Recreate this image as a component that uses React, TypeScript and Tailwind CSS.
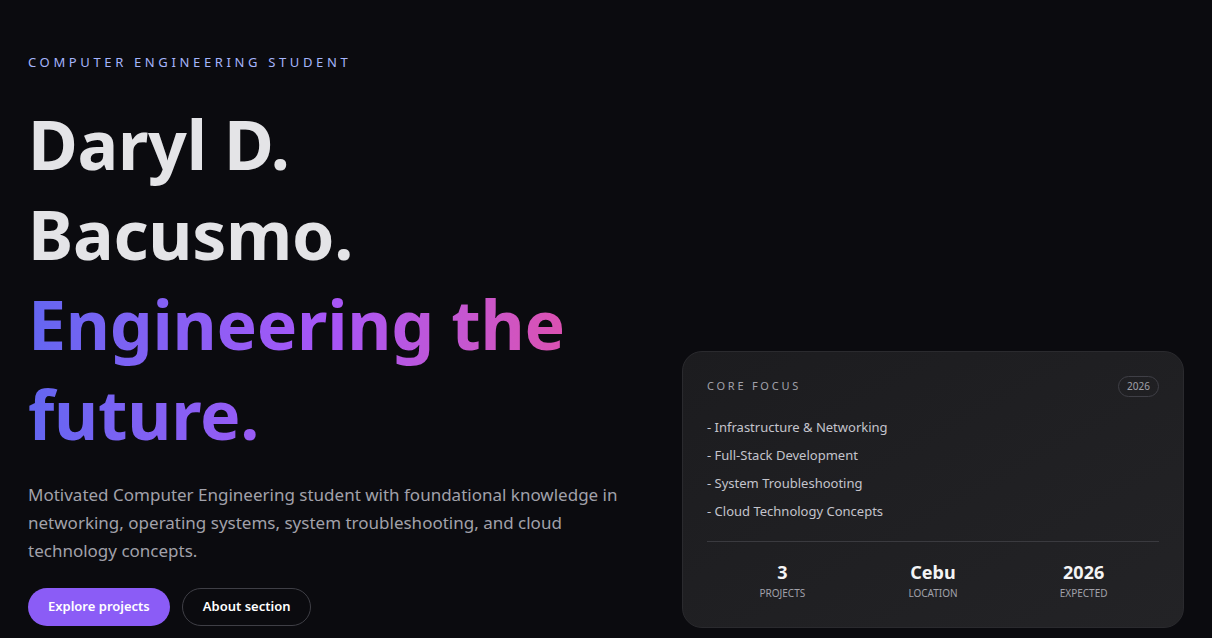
import React from "react";

const focus = [
  "Infrastructure & Networking",
  "Full-Stack Development",
  "System Troubleshooting",
  "Cloud Technology Concepts",
];

const stats = [
  { value: "3", label: "Projects" },
  { value: "Cebu", label: "Location" },
  { value: "2026", label: "Expected" },
];

export default function App() {
  return (
    <div
      className="min-h-[638px] w-full bg-[#0b0b0f] text-white overflow-hidden"
      style={{ fontFamily: '"Noto Sans", "Open Sans", sans-serif' }}
    >
      <section className="flex items-end justify-between px-7 pt-[54px] pb-[9px]">
        <div className="flex-1 pb-[2px]">
          <p className="text-[13px] leading-[16px] tracking-[0.28em] text-[#a5b4fc]">
            COMPUTER ENGINEERING STUDENT
          </p>
          <h1 className="mt-[29px] text-[68px] font-bold leading-[90px] tracking-[-0.004em] text-[#e4e4e7]">
            <span className="block">Daryl D.</span>
            <span className="block">Bacusmo.</span>
            <span className="block w-[610px] bg-gradient-to-r from-[#6366f1] via-[#a855f7] to-[#ec4899] bg-clip-text text-transparent">
              Engineering the future.
            </span>
          </h1>
          <p className="mt-[22px] max-w-[600px] text-[17px] leading-[28px] text-[#a1a1aa]">
            Motivated Computer Engineering student with foundational knowledge in networking,
            operating systems, system troubleshooting, and cloud technology concepts.
          </p>
          <div className="mt-[23px] flex gap-3">
            <button className="h-[38px] rounded-full bg-[#8b5cf6] px-5 text-[13px] font-semibold text-white">
              Explore projects
            </button>
            <button className="h-[38px] rounded-full border border-[#3f3f46] px-5 text-[13px] font-semibold text-white">
              About section
            </button>
          </div>
        </div>

        <div className="w-[502px] shrink-0 rounded-[20px] border border-[#2a2a2e] bg-gradient-to-br from-[#1c1c1f] to-[#232326] px-[24px] pt-[24px] pb-[27px]">
          <div className="flex items-center justify-between">
            <span className="text-[11px] tracking-[0.25em] text-[#a1a1aa]">CORE FOCUS</span>
            <span className="rounded-full border border-[#3f3f46] px-2 py-[2px] text-[10px] leading-[15px] text-[#a1a1aa]">
              2026
            </span>
          </div>
          <ul className="mt-[20px] flex flex-col gap-[8px]">
            {focus.map((f) => (
              <li key={f} className="text-[13px] leading-[20px] text-[#c4c4cc]">
                - {f}
              </li>
            ))}
          </ul>
          <div className="mt-[20px] border-t border-[#3a3a3f] pt-[18px] grid grid-cols-3">
            {stats.map((s) => (
              <div key={s.label} className="flex flex-col items-center">
                <span className="text-[18px] font-bold leading-[24px] text-[#f4f4f5]">{s.value}</span>
                <span className="mt-[2px] text-[10px] uppercase leading-[14px] text-[#a1a1aa]">
                  {s.label}
                </span>
              </div>
            ))}
          </div>
        </div>
      </section>
    </div>
  );
}
